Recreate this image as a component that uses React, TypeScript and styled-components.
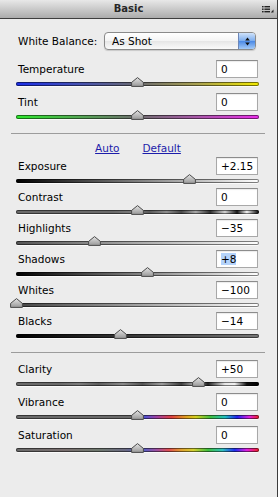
import styled, { createGlobalStyle } from 'styled-components';

const GlobalStyle = createGlobalStyle`
  * { box-sizing: border-box; }
  body {
    margin: 0;
    background: #ececec;
    font-family: "DejaVu Sans", "Liberation Sans", sans-serif;
  }
`;

const Panel = styled.div`
  width: 278px;
  min-height: 100vh;
  background: #ececec;
  border-right: 1px solid #3c3c3c;
`;
const Header = styled.header`
  display: flex;
  align-items: center;
  height: 19px;
  background: linear-gradient(#e8e8e8, #acacac);
  border-bottom: 1px solid #3e3e3e;
`;
const Title = styled.h2`
  flex: 1;
  margin: 0;
  text-align: center;
  font-size: 10px;
  font-weight: bold;
  color: #262626;
  line-height: 18px;
`;
const MenuButton = styled.div`
  width: 20px;
  display: flex;
  padding-left: 5px;
`;
const Body = styled.div`
  padding: 0 18px 0 16px;
`;
const WbRow = styled.div`
  display: flex;
  align-items: center;
  margin: 13px 0 10px;
  height: 18px;
`;
const Label = styled.span`
  padding-left: 2px;
  font-size: 10.5px;
  color: #000;
`;
const Select = styled.div`
  display: flex;
  width: 152px;
  height: 18px;
  margin-left: auto;
  margin-right: 3px;
  border: 1px solid #8a8a8a;
  border-radius: 4px;
  overflow: hidden;
  background: linear-gradient(#ffffff, #f4f4f4 50%, #e6e6e6 52%, #fafafa);
  box-shadow: 0 1px 1px rgba(0, 0, 0, 0.15);
`;
const SelectText = styled.span`
  flex: 1;
  padding-left: 7px;
  font-size: 10.5px;
  line-height: 16px;
  color: #000;
`;
const SelectArrows = styled.span`
  width: 17px;
  display: flex;
  align-items: center;
  justify-content: center;
  border-left: 1px solid #6c86b8;
  background: linear-gradient(#cfe2fa, #7eaeee 48%, #4c8ae6 52%, #a4cbf7);
`;
const Divider = styled.hr<{ $top: number; $bottom: number }>`
  border: none;
  height: 1px;
  background: #9c9c9c;
  margin: ${(p) => p.$top}px -6px ${(p) => p.$bottom}px -5px;
`;
const Links = styled.div`
  display: flex;
  justify-content: center;
  gap: 23px;
  height: 14px;
  margin-bottom: 2px;
  margin-left: 1px;
`;
const Link = styled.a`
  font-size: 10.5px;
  line-height: 14px;
  color: #1c1caa;
  text-decoration: underline;
`;
const Row = styled.div<{ $pitch: number }>`
  display: flex;
  flex-direction: column;
  height: ${(p) => p.$pitch}px;
`;
const RowTop = styled.div`
  display: flex;
  align-items: center;
  justify-content: space-between;
  height: 18px;
`;
const ValueBox = styled.div`
  width: 42px;
  height: 18px;
  margin-right: 1px;
  padding-left: 4px;
  border: 1px solid #a8a8a8;
  border-top-color: #8c8c8c;
  background: #fff;
  box-shadow: inset 0 1px 1px rgba(0, 0, 0, 0.08);
  font-size: 10.5px;
  line-height: 16px;
  color: #000;
`;
const Selected = styled.span`
  background: #b4d3fb;
`;
const Track = styled.div<{ $bg: string }>`
  position: relative;
  height: 4px;
  margin-top: 4px;
  border-radius: 2px;
  background: ${(p) => p.$bg};
  box-shadow: inset 0 0 0 1px rgba(0, 0, 0, 0.5), 0 1px 0 #fafafa;
`;
const Thumb = styled.svg`
  position: absolute;
  top: -5px;
  width: 13px;
  height: 10px;
`;

const stripes =
  'linear-gradient(90deg, #6a6a6a 0%, #6a6a6a 40%, #7a7a7a 48%, #5c5c5c 55%, #8e8e8e 62%, #4a4a4a 68%, #a8a8a8 74%, #303030 80%, #d2d2d2 86%, #181818 91%, #f2f2f2 95%, #000 100%)';
const clarityStripes =
  'linear-gradient(90deg, #6a6a6a 0%, #6a6a6a 18%, #7c7c7c 26%, #5e5e5e 34%, #8a8a8a 44%, #545454 52%, #9c9c9c 60%, #3e3e3e 68%, #b4b4b4 74%, #202020 79%, #e6e6e6 86%, #f0f0f0 90%, #101010 95%, #000 100%)';

type Slider = {
  label: string;
  value: string;
  v: number;
  min: number;
  max: number;
  bg: string;
  selected?: boolean;
};

const whiteBalance: Slider[] = [
  {
    label: 'Temperature', value: '0', v: 0, min: -100, max: 100,
    bg: 'linear-gradient(90deg, #1a2ee8 0%, #4450b4 25%, #6a6a70 50%, #aaa250 75%, #f2ea00 100%)',
  },
  {
    label: 'Tint', value: '0', v: 0, min: -100, max: 100,
    bg: 'linear-gradient(90deg, #2ee82e 0%, #52aa52 25%, #6e6e6e 50%, #aa58aa 75%, #ea2eea 100%)',
  },
];

const tone: Slider[] = [
  { label: 'Exposure', value: '+2.15', v: 2.15, min: -5, max: 5, bg: 'linear-gradient(90deg, #000, #fff)' },
  { label: 'Contrast', value: '0', v: 0, min: -100, max: 100, bg: stripes },
  { label: 'Highlights', value: '\u221235', v: -35, min: -100, max: 100, bg: 'linear-gradient(90deg, #555, #fff)' },
  { label: 'Shadows', value: '+8', v: 8, min: -100, max: 100, bg: 'linear-gradient(90deg, #000, #fff)', selected: true },
  { label: 'Whites', value: '\u2212100', v: -100, min: -100, max: 100, bg: 'linear-gradient(90deg, #444, #fff)' },
  { label: 'Blacks', value: '\u221214', v: -14, min: -100, max: 100, bg: 'linear-gradient(90deg, #000, #777)' },
];

const presence: Slider[] = [
  { label: 'Clarity', value: '+50', v: 50, min: -100, max: 100, bg: clarityStripes },
  {
    label: 'Vibrance', value: '0', v: 0, min: -100, max: 100,
    bg: 'linear-gradient(90deg, #6a6a6a 0%, #6a6a6a 49%, #5050d0 53%, #a040a0 58%, #e04040 64%, #e0a020 70%, #d4d020 74%, #40c040 80%, #20c0c0 86%, #2020f0 91%, #e020e0 96%, #f02020 100%)',
  },
  {
    label: 'Saturation', value: '0', v: 0, min: -100, max: 100,
    bg: 'linear-gradient(90deg, #6a6a6a 0%, #786e6e 20%, #6e786e 34%, #6a6a82 45%, #5060c4 52%, #a050a0 58%, #e05050 63%, #e0a030 68%, #d4d030 73%, #40c040 79%, #30c0c0 85%, #2030f0 90%, #e020e0 95%, #f02020 100%)',
  },
];

function MenuIcon() {
  return (
    <svg width="12" height="7" viewBox="0 0 12 7">
      <g fill="#222">
        <rect x="0" y="0" width="1.6" height="1.4" />
        <rect x="2.4" y="0" width="5.6" height="1.4" />
        <rect x="0" y="2.5" width="1.6" height="1.4" />
        <rect x="2.4" y="2.5" width="5.6" height="1.4" />
        <rect x="0" y="5" width="1.6" height="1.4" />
        <rect x="2.4" y="5" width="5.6" height="1.4" />
        <path d="M11.5 3.5 L11.5 6.5 L8.8 6.5 Z" />
      </g>
    </svg>
  );
}

function SliderRow({ s, pitch }: { s: Slider; pitch: number }) {
  const pos = (s.v - s.min) / (s.max - s.min);
  return (
    <Row $pitch={pitch}>
      <RowTop>
        <Label>{s.label}</Label>
        <ValueBox>{s.selected ? <Selected>{s.value}</Selected> : s.value}</ValueBox>
      </RowTop>
      <Track $bg={s.bg}>
        <Thumb viewBox="0 0 13 10" style={{ left: `calc(${pos * 100}% - 6.5px)` }}>
          <defs>
            <linearGradient id="thumbFill" x1="0" y1="0" x2="0" y2="1">
              <stop offset="0" stopColor="#e4e4e4" />
              <stop offset="1" stopColor="#979797" />
            </linearGradient>
          </defs>
          <path
            d="M6.5 0.6 L12.4 5.4 L12.4 9.4 L0.6 9.4 L0.6 5.4 Z"
            fill="url(#thumbFill)"
            stroke="#4a4a4a"
            strokeWidth="1"
            strokeLinejoin="round"
          />
        </Thumb>
      </Track>
    </Row>
  );
}

export default function App() {
  return (
    <>
      <GlobalStyle />
      <Panel>
        <Header>
          <Title>Basic</Title>
          <MenuButton>
            <MenuIcon />
          </MenuButton>
        </Header>
        <Body>
          <WbRow>
            <Label>White Balance:</Label>
            <Select>
              <SelectText>As Shot</SelectText>
              <SelectArrows>
                <svg width="5" height="9" viewBox="0 0 5 9">
                  <path d="M2.5 0.5 L4.8 3.5 L0.2 3.5 Z M2.5 8.5 L4.8 5.5 L0.2 5.5 Z" fill="#111" />
                </svg>
              </SelectArrows>
            </Select>
          </WbRow>
          {whiteBalance.map((s) => (
            <SliderRow key={s.label} s={s} pitch={33} />
          ))}

          <Divider $top={7} $bottom={7} />
          <Links>
            <Link>Auto</Link>
            <Link>Default</Link>
          </Links>
          {tone.map((s) => (
            <SliderRow key={s.label} s={s} pitch={31} />
          ))}

          <Divider $top={9} $bottom={7} />
          {presence.map((s) => (
            <SliderRow key={s.label} s={s} pitch={33} />
          ))}
        </Body>
      </Panel>
    </>
  );
}
